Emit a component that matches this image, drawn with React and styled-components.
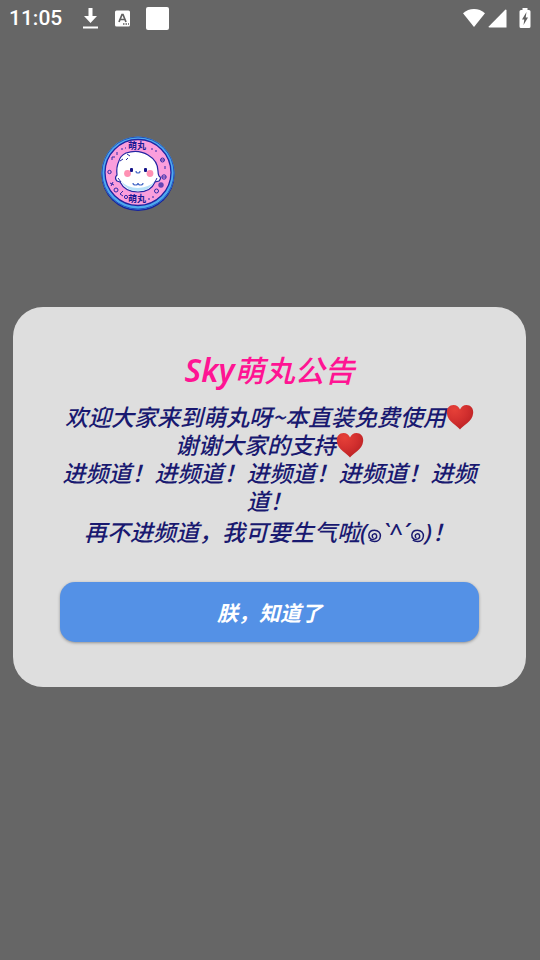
import React from "react";
import styled, { createGlobalStyle } from "styled-components";

const GlobalStyle = createGlobalStyle`
  * { box-sizing: border-box; }
  body {
    margin: 0;
    background: #666666;
    font-family: "Noto Sans", "Noto Sans CJK SC", sans-serif;
  }
`;

const Screen = styled.main`
  min-height: 100vh;
  display: flex;
  flex-direction: column;
  background: #666666;
`;

const StatusBar = styled.header`
  height: 36px;
  padding: 0 9px 0 9px;
  display: flex;
  align-items: center;
  justify-content: space-between;
  color: #ffffff;
`;

const StatusGroup = styled.div`
  display: flex;
  align-items: center;
  gap: ${(p) => p.$gap}px;
  svg { display: block; }
`;

const Clock = styled.time`
  width: 57px;
  font: 500 21px/24px Roboto, sans-serif;
`;

const FloatingLogo = styled.div`
  padding: 100px 0 0 100px;
  svg { display: block; }
`;

const Dialog = styled.section`
  margin: 95px 14px 0 13px;
  padding: 42px 47px 45px;
  border-radius: 30px;
  background: #dedede;
  text-align: center;
`;

const Title = styled.h1`
  margin: 0 0 12px;
  color: #ff1493;
  font: italic 500 30px/40px "Noto Sans CJK SC", sans-serif;
`;

const Brand = styled.span`
  font-family: "Noto Sans", sans-serif;
  font-size: 32px;
  font-weight: 600;
`;

const Message = styled.p`
  margin: 0;
  color: #191970;
  font: italic 500 23px/${(p) => (p.$tall ? 34 : 28)}px "Noto Sans CJK SC", sans-serif;
`;

const Heart = styled.svg`
  display: inline-block;
  width: 28px;
  height: 26px;
  margin: -4px 0;
  vertical-align: 0;
`;

const Face = styled.span`
  font-family: "Noto Sans", "Noto Sans CJK SC", sans-serif;
  font-size: 24px;
  line-height: 28px;
  white-space: nowrap;
`;

const Curl = styled.svg`
  display: inline-block;
  width: 15px;
  height: 15px;
  vertical-align: -2px;
`;

const ConfirmButton = styled.button`
  display: block;
  width: 100%;
  height: 60px;
  margin-top: 34px;
  padding: 0;
  border: 0;
  border-radius: 15px;
  background: #5491e6;
  color: #ffffff;
  box-shadow: 0 1px 3px rgba(0, 0, 0, 0.35);
  font: italic 700 21px/30px "Noto Sans CJK SC", sans-serif;
  cursor: pointer;
`;

function RedHeart() {
  return (
    <Heart viewBox="0 0 28 26" role="img" aria-label="❤️">
      <defs>
        <radialGradient id="heart" cx="0.3" cy="0.2" r="0.9">
          <stop offset="0" stopColor="#e64038" />
          <stop offset="0.5" stopColor="#d3302f" />
          <stop offset="1" stopColor="#b71f22" />
        </radialGradient>
      </defs>
      <path
        d="M14 25.500C12 22 1.500 18 0.800 9C0.400 4 3.500 1 7.500 1C10.500 1 13 2.800 14 5.500C15 2.800 17.500 1 20.500 1C24.500 1 27.600 4 27.200 9C26.500 18 16 22 14 25.500Z"
        fill="url(#heart)"
      />
    </Heart>
  );
}

function Spiral() {
  return (
    <Curl viewBox="0 0 14 14" role="img" aria-label="๑">
      <path
        d="M6 9C4.500 8.800 4.300 6 6.500 5.500C9.200 5 10 8.700 7.800 10C4.500 11.800 1.400 9.500 1.700 6.500C2 3.500 4.500 2 7 2C10.500 2 12.700 4.600 12.500 7.500C12.300 10.800 9.800 12.700 7 12.700C5 12.700 3.800 12.200 2.600 11.200"
        fill="none"
        stroke="currentColor"
        strokeWidth="1.4"
      />
    </Curl>
  );
}

function DownloadIcon() {
  return (
    <svg width="17" height="22" viewBox="0 0 17 22" fill="#fff" aria-hidden="true">
      <path d="M6.500 1H10.500V9H15L8.500 16L2 9H6.500Z M1 19.500H16V21.500H1Z" />
    </svg>
  );
}

function LetterIcon() {
  return (
    <svg width="15" height="17" viewBox="0 0 15 17" aria-hidden="true">
      <rect width="15" height="16" y="0.5" rx="1.5" fill="#fff" />
      <path d="M4 12L7 4.500H8L11 12M5.200 9.500H9.800" fill="none" stroke="#606060" strokeWidth="1.7" />
      <path d="M8 14H9.500M10.500 14H12M13 14H14" stroke="#606060" strokeWidth="1.4" />
    </svg>
  );
}

function SquareIcon() {
  return (
    <svg width="23" height="23" aria-hidden="true">
      <rect width="23" height="23" rx="2" fill="#fff" />
    </svg>
  );
}

function WifiIcon() {
  return (
    <svg width="24" height="20" viewBox="0 0 24 20" aria-hidden="true">
      <path d="M1 5.300C7 -0.400 17 -0.400 23 5.300L12 19Z" fill="#fff" />
    </svg>
  );
}

function SignalIcon() {
  return (
    <svg width="19" height="19" viewBox="0 0 19 19" aria-hidden="true">
      <path d="M17.500 0.500Q18.500 0.500 18.500 1.500V18.500H1.500Q0 18.500 1 17.200Z" fill="#fff" />
    </svg>
  );
}

function BatteryIcon() {
  return (
    <svg width="12" height="20" viewBox="0 0 12 20" aria-hidden="true">
      <path d="M3.500 0H8.500V2H10Q11.500 2 11.500 3.500V18.500Q11.500 20 10 20H2Q0.500 20 0.500 18.500V3.500Q0.500 2 2 2H3.500Z" fill="#fff" />
      <path d="M7.500 4L3 11.500H5.300L4.500 17L9 9.500H6.700Z" fill="#606060" />
    </svg>
  );
}

function MascotBadge() {
  return (
    <svg width="76" height="76" viewBox="0 0 76 76" role="img" aria-label="萌丸">
      <circle cx="38" cy="38.500" r="36.500" fill="#1422a0" />
      <circle cx="38" cy="37" r="36.500" fill="#4ea9ef" />
      <circle cx="38" cy="37" r="36" fill="none" stroke="#2456bd" strokeWidth="1" />
      <circle cx="38" cy="36.500" r="33" fill="#fb9edc" stroke="#2025a0" strokeWidth="1.300" />
      <g fill="#1c1a94" fontFamily="Noto Sans CJK SC, sans-serif" fontSize="9" fontWeight="700" textAnchor="middle">
        <text x="37" y="13">萌丸</text>
        <text x="37" y="66">萌丸</text>
      </g>
      <g fill="none" stroke="#3028a8" strokeWidth="1">
        <circle cx="9.500" cy="36" r="1.700" />
        <circle cx="62.500" cy="24" r="2" />
        <circle cx="64" cy="41" r="2.200" />
        <path d="M62 41H66M61 24H64" />
        <rect x="59" y="47" width="4" height="4" rx="1" />
        <path d="M59 49H63M61 47V51" />
        <circle cx="56.500" cy="55" r="2" />
        <path d="M10 47L14 49M13 46L11 50" />
        <rect x="14" y="52" width="4" height="4" rx="2" />
        <path d="M23 55L20 58L23 60" />
        <circle cx="26" cy="61" r="1.600" />
        <path d="M12 24V21H15M17 19V16M21 13H23M25 12H26M51 13H53M55 15H57M65 30V33M48 63H50M52 61H54" />
      </g>
      <path
        d="M26 17Q38 13 48 19Q58 25 58 35Q58 38 59 40Q62 42 59 45L55 46Q51 56 38 56Q25 56 20 46L17 45Q14 42 17 39Q16 31 19 25Q20 20 26 17Z"
        fill="#fff" stroke="#2425a2" strokeWidth="1.200"
      />
      <path d="M21 45Q26 55 38 55Q50 55 55 45Q50 51 38 52Q27 52 21 45Z" fill="#b7e0f8" />
      <path d="M20 25L23 23M26 24L28 22M27 18L30 20M55 46L57 42M21 46L18 42" fill="none" stroke="#2629a5" strokeWidth="1" />
      <circle cx="27.500" cy="37.500" r="3.400" fill="#ff91b3" />
      <circle cx="50" cy="37.500" r="3.400" fill="#ff91b3" />
      <rect x="30" y="32" width="3" height="4" rx="1" fill="#151489" />
      <rect x="44" y="32" width="3" height="4" rx="1" fill="#151489" />
      <path d="M36 35Q36 37 38 37Q40 37 40 35M33 47Q33 49 35.500 49Q38 49 38 47Q38 49 40.500 49Q43 49 43 47" fill="none" stroke="#4b6dc8" strokeWidth="1.200" />
    </svg>
  );
}

export default function App() {
  return (
    <>
      <GlobalStyle />
      <Screen>
        <StatusBar>
          <StatusGroup $gap={16}>
            <Clock>11:05</Clock>
            <DownloadIcon />
            <LetterIcon />
            <SquareIcon />
          </StatusGroup>
          <StatusGroup $gap={12}>
            <StatusGroup $gap={2}>
              <WifiIcon />
              <SignalIcon />
            </StatusGroup>
            <BatteryIcon />
          </StatusGroup>
        </StatusBar>
        <FloatingLogo>
          <MascotBadge />
        </FloatingLogo>
        <Dialog role="dialog" aria-labelledby="notice-title">
          <Title id="notice-title"><Brand>Sky</Brand>萌丸公告</Title>
          <Message>欢迎大家来到萌丸呀~本直装免费使用<RedHeart /></Message>
          <Message>谢谢大家的支持<RedHeart /></Message>
          <Message>进频道！进频道！进频道！进频道！进频道！</Message>
          <Message $tall>
            再不进频道，我可要生气啦<Face>(<Spiral />`^´<Spiral />)</Face>！
          </Message>
          <ConfirmButton type="button">朕，知道了</ConfirmButton>
        </Dialog>
      </Screen>
    </>
  );
}
